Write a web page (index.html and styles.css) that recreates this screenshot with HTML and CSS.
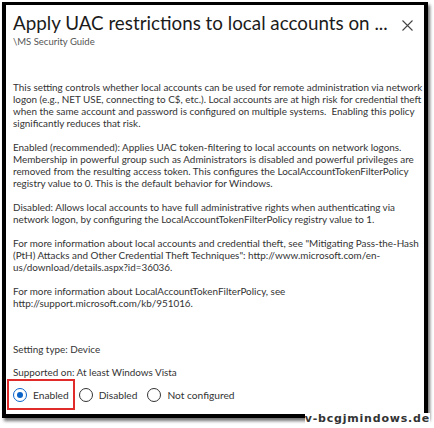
FILE: index.html
```html
<!DOCTYPE html>
<html>
<head>
<meta charset="utf-8">
<link rel="stylesheet" href="styles.css">
</head>
<body>
<div class="frame">
  <div class="head">
    <div class="titles">
      <div class="title">Apply UAC restrictions to local accounts on ...</div>
      <div class="sub">\MS Security Guide</div>
    </div>
    <svg class="close" width="11" height="11" viewBox="0 0 11 11"><path d="M0.5 0.5L10.5 10.5M10.5 0.5L0.5 10.5" stroke="#444" stroke-width="1.1" fill="none"/></svg>
  </div>
  <div class="desc">
    <p>This setting controls whether local accounts can be used for remote administration via network<br>logon (e.g., NET USE, connecting to C$, etc.). Local accounts are at high risk for credential theft<br>when the same account and password is configured on multiple systems.&nbsp; Enabling this policy<br>significantly reduces that risk.</p>
    <p>Enabled (recommended): Applies UAC token-filtering to local accounts on network logons.<br>Membership in powerful group such as Administrators is disabled and powerful privileges are<br>removed from the resulting access token. This configures the LocalAccountTokenFilterPolicy<br>registry value to 0. This is the default behavior for Windows.</p>
    <p>Disabled: Allows local accounts to have full administrative rights when authenticating via<br>network logon, by configuring the LocalAccountTokenFilterPolicy registry value to 1.</p>
    <p>For more information about local accounts and credential theft, see "Mitigating Pass-the-Hash<br>(PtH) Attacks and Other Credential Theft Techniques": http://www.microsoft.com/en-<br>us/download/details.aspx?id=36036.</p>
    <p>For more information about LocalAccountTokenFilterPolicy, see<br>http://support.microsoft.com/kb/951016.</p>
  </div>
  <div class="meta">
    <div class="type">Setting type: Device</div>
    <div class="supported">Supported on: At least Windows Vista</div>
  </div>
  <div class="radios">
    <div class="opt sel"><span class="radio on"></span>Enabled</div>
    <div class="opt"><span class="radio"></span>Disabled</div>
    <div class="opt"><span class="radio"></span>Not configured</div>
  </div>
</div>
<div class="mark">v-bcgjmindows.de</div>
</body>
</html>
```
FILE: styles.css
```css
html, body {
  margin: 0;
  padding: 0;
  background: #fff;
  width: 434px;
  height: 428px;
  overflow: hidden;
  position: relative;
}
.frame {
  box-sizing: border-box;
  margin: 2px 0 0 2px;
  width: 426px;
  height: 416px;
  border: 4px solid #000;
  border-top-width: 3px;
  box-shadow: 2px 3px 3px rgba(0,0,0,0.55);
  padding: 0 0 0 7px;
  overflow: hidden;
  font-family: Lato, "Liberation Sans", sans-serif;
  color: #333;
}
.head {
  display: flex;
  align-items: flex-start;
  justify-content: space-between;
  padding-top: 5px;
}
.titles {
  flex: 1;
  min-width: 0;
}
.title {
  font-size: 18.8px;
  color: #1b1b1b;
  line-height: 26px;
  white-space: nowrap;
}
.sub {
  font-size: 9.5px;
  color: #555;
  line-height: 12px;
}
.close {
  flex: none;
  margin: 10px 11px 0 0;
}
.desc {
  margin-top: 33px;
  font-size: 9.9px;
  line-height: 12px;
  white-space: nowrap;
}
.desc p {
  margin: 0 0 12px 0;
}
.meta {
  margin-top: 34px;
  font-size: 9.9px;
  line-height: 12px;
}
.supported {
  margin-top: 11px;
}
.radios {
  display: flex;
  align-items: center;
  margin-top: 3px;
  font-size: 10.2px;
}
.opt {
  display: flex;
  align-items: center;
  gap: 6px;
  margin-right: 10px;
  height: 27px;
}
.opt.sel {
  outline: 2px solid #e02b2b;
  margin-left: -4px;
  padding: 0 4px 0 4px;
  margin-right: 6px;
}
.radio {
  box-sizing: border-box;
  width: 14px;
  height: 14px;
  border: 1.2px solid #333;
  border-radius: 50%;
  display: inline-block;
  position: relative;
}
.radio.on {
  border-color: #0a64c8;
}
.radio.on::after {
  content: "";
  position: absolute;
  left: 3px;
  top: 3px;
  width: 6px;
  height: 6px;
  border-radius: 50%;
  background: #0a64c8;
}
.mark {
  position: absolute;
  right: 4px;
  bottom: 3px;
  font-family: "DejaVu Sans", sans-serif;
  font-weight: bold;
  font-size: 11px;
  color: #333;
  background: #fff;
  line-height: 12px;
  letter-spacing: 0.8px;
}
```
